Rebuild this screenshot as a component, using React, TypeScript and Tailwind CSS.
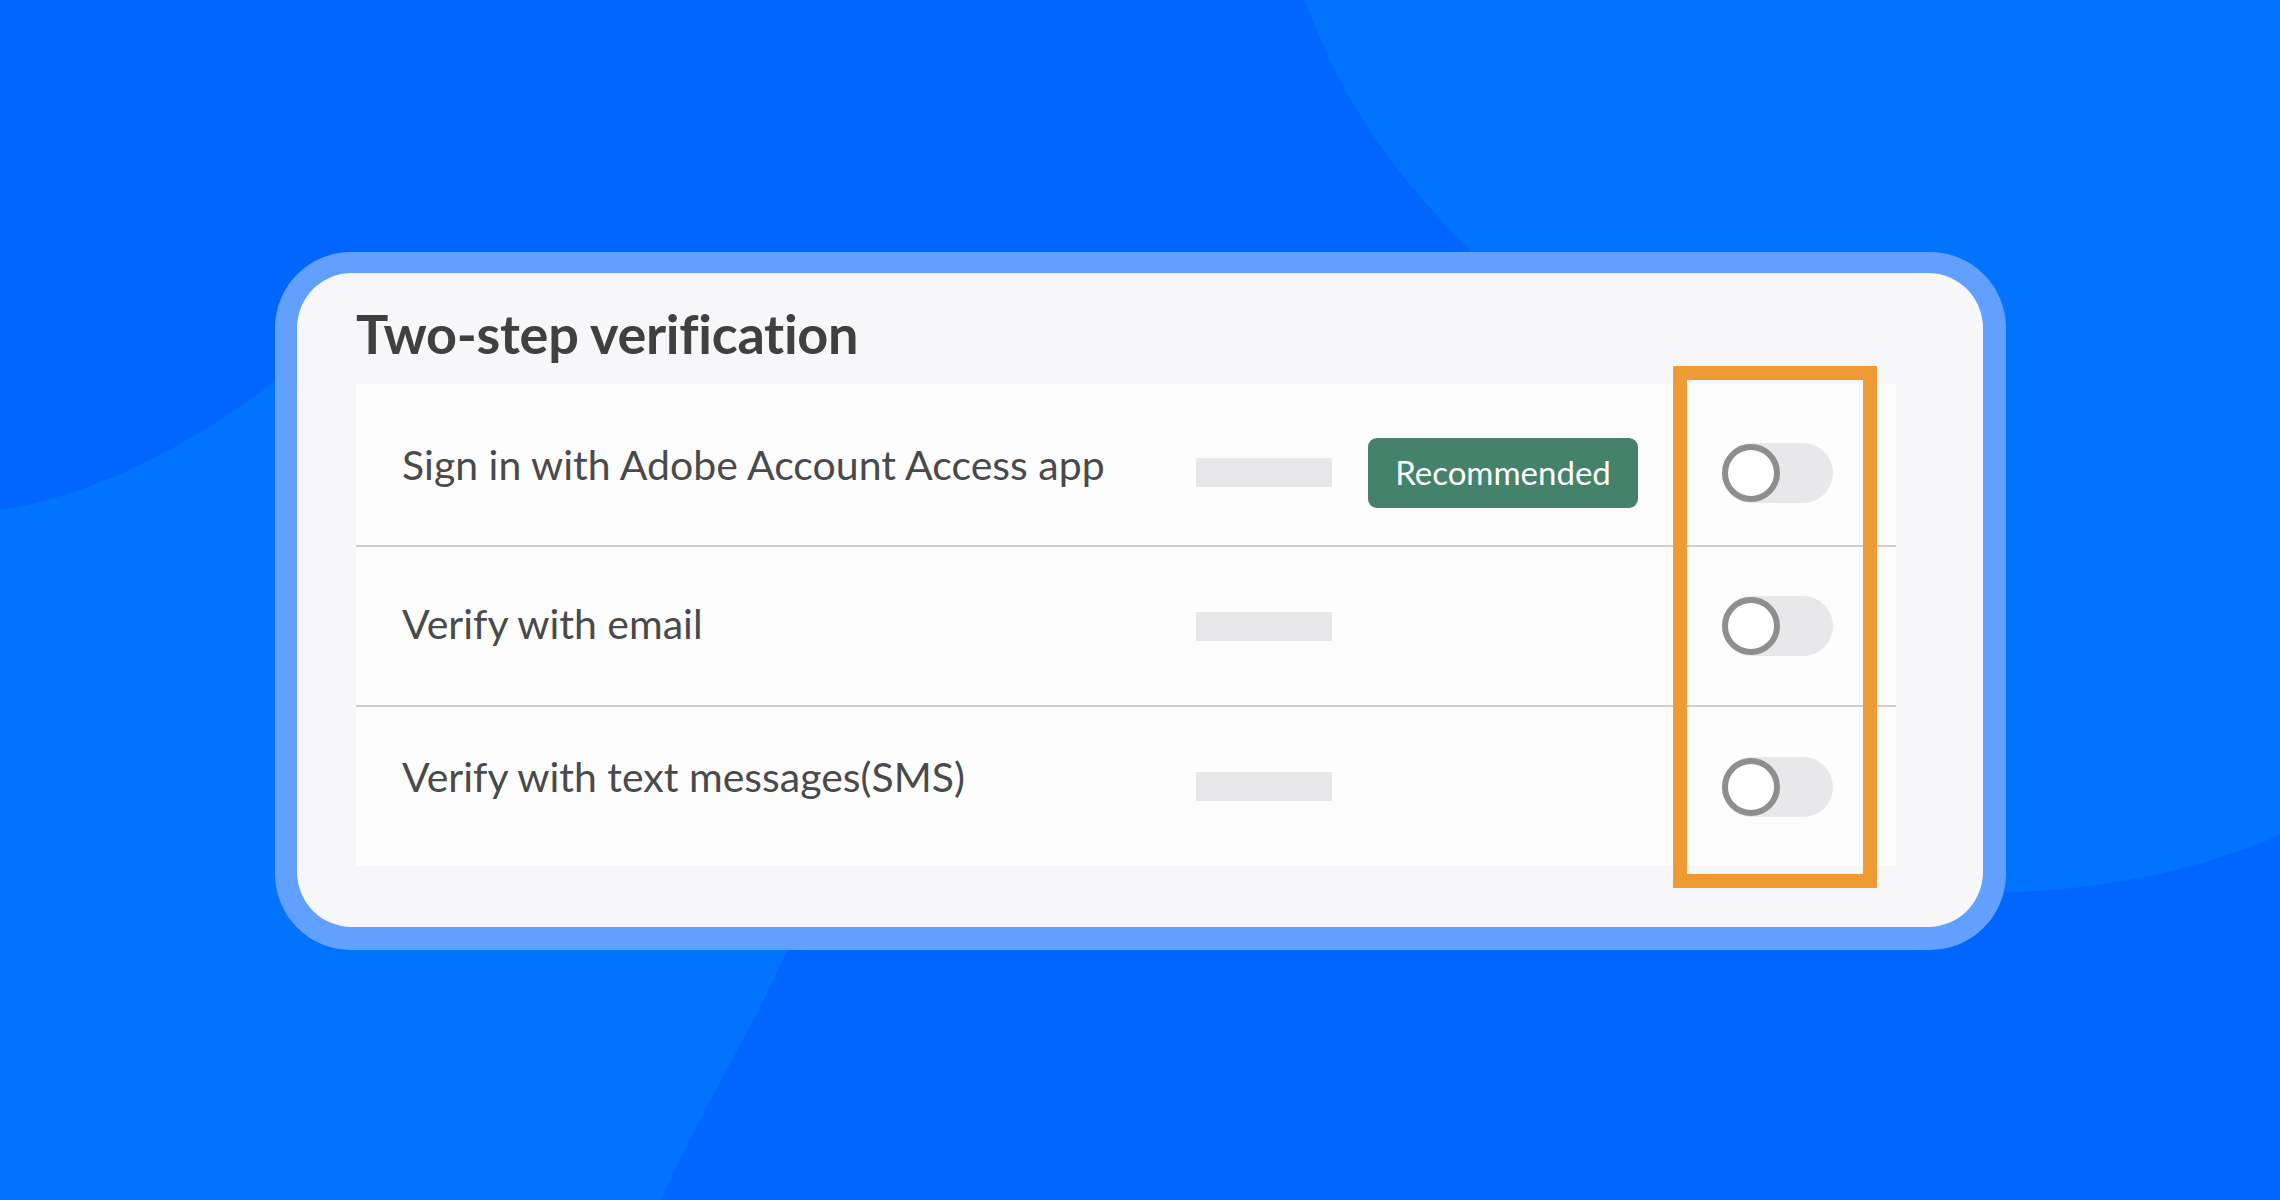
const font = { fontFamily: 'Lato, "Open Sans", sans-serif' };

type Row = {
  label: string;
  recommended?: boolean;
  height: string;
  textShift: string;
  itemShift: string;
};

const ROWS: Row[] = [
  { label: 'Sign in with Adobe Account Access app', recommended: true, height: 'h-[163px]', textShift: 'mb-[0px]', itemShift: 'mt-[16px]' },
  { label: 'Verify with email', height: 'h-[160px]', textShift: 'mb-[4px]', itemShift: 'mt-0' },
  { label: 'Verify with text messages(SMS)', height: 'h-[159px]', textShift: 'mb-[20px]', itemShift: 'mt-0' },
];

function Toggle() {
  return (
    <div className="relative w-[111px] h-[60px] rounded-full bg-[#e8e8ea]">
      {/* thumb */}
      <div className="absolute left-0 top-[1px] w-[58px] h-[58px] rounded-full border-[6px] border-[#8e8e8e] bg-white" />
    </div>
  );
}

function Background() {
  return (
    <svg
      className="absolute inset-0"
      width="2280"
      height="1200"
      viewBox="0 0 2280 1200"
      aria-hidden
    >
      <rect width="2280" height="1200" fill="#0066ff" />
      {/* lighter blob, top right */}
      <path
        d="M1305 0 C1345 110 1400 180 1470 250 L1900 880 C1980 905 2150 892 2280 835 L2280 0 Z"
        fill="#0073ff"
      />
      {/* lighter blob, bottom left */}
      <path
        d="M0 510 C100 495 200 440 290 370 L840 700 L800 920 C760 1020 700 1110 661 1200 L0 1200 Z"
        fill="#0073ff"
      />
    </svg>
  );
}

export default function App() {
  return (
    <div className="relative w-[2280px] h-[1200px] overflow-hidden" style={font}>
      <Background />

      <div className="relative pl-[275px] pt-[252px]">
        {/* card with light blue rim */}
        <div className="w-[1731px] h-[698px] rounded-[76px] bg-[#62a0ff] pl-[22px] pt-[21px] pr-[23px] pb-[23px]">
          <div className="h-full rounded-[55px] bg-[#f7f6f8] pl-[59px] pr-[87px] pt-[29px]">
            <h2 className="text-[54px] leading-[64px] font-bold text-[#404040] tracking-[-0.3px]">
              Two-step verification
            </h2>

            <div className="relative mt-[18px] bg-[#fdfdfe]">
              {ROWS.map((row, i) => (
                <div
                  key={row.label}
                  className={`flex items-center ${row.height} pl-[46px] ${
                    i < ROWS.length - 1 ? 'border-b-2 border-[#cfcfd2]' : ''
                  }`}
                >
                  <div className={`w-[794px] text-[41px] leading-[48px] text-[#4a4a4a] ${row.textShift}`}>
                    {row.label}
                  </div>
                  <div className={`flex items-center ${row.itemShift}`}>
                    <div className="w-[136px] h-[29px] bg-[#e7e7e9]" />
                    <div className="w-[270px] ml-[36px]">
                      {row.recommended && (
                        <div className="h-[70px] rounded-[9px] bg-[#44826c] flex items-center justify-center text-[33px] text-white">
                          Recommended
                        </div>
                      )}
                    </div>
                    <div className="ml-[84px]">
                      <Toggle />
                    </div>
                  </div>
                </div>
              ))}

              {/* highlight frame around the toggles */}
              <div className="absolute left-[1317px] top-[-18px] w-[204px] h-[522px] border-[14px] border-[#ee9b33]" />
            </div>
          </div>
        </div>
      </div>
    </div>
  );
}
